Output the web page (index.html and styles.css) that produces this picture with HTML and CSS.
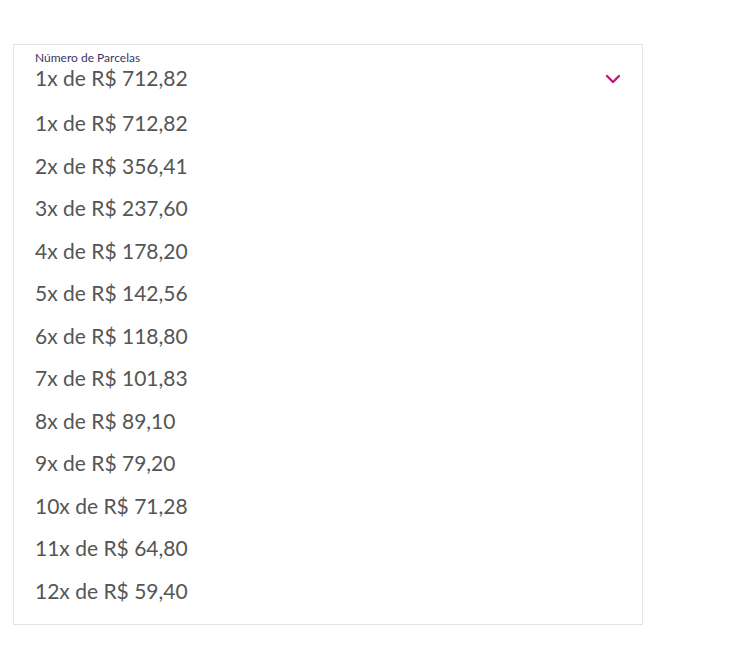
FILE: index.html
```html
<!DOCTYPE html>
<html>
	<head>
		<meta charset="utf-8">
		<title>Parcelas</title>
		<link rel="stylesheet" href="styles.css">
	</head>
	<body>
		<div class="select-box">
			<div class="select-head">
				<div class="select-current">
					<span class="select-label">Número de Parcelas</span>
					<span class="select-value">1x de R$ 712,82</span>
				</div>
				<svg class="chevron" width="16" height="10" viewBox="0 0 16 10">
					<path d="M2 2 L8 8 L14 2" fill="none" stroke="#c2187a" stroke-width="2.4" stroke-linecap="round" stroke-linejoin="round"/>
				</svg>
			</div>
			<ul class="options">
				<li>1x de R$ 712,82</li>
				<li>2x de R$ 356,41</li>
				<li>3x de R$ 237,60</li>
				<li>4x de R$ 178,20</li>
				<li>5x de R$ 142,56</li>
				<li>6x de R$ 118,80</li>
				<li>7x de R$ 101,83</li>
				<li>8x de R$ 89,10</li>
				<li>9x de R$ 79,20</li>
				<li>10x de R$ 71,28</li>
				<li>11x de R$ 64,80</li>
				<li>12x de R$ 59,40</li>
			</ul>
		</div>
	</body>
</html>
```

FILE: styles.css
```css
body {
	margin: 0;
	padding: 44px 0 0 13px;
	font-family: Lato, "Open Sans", sans-serif;
	color: #555;
	background: #fff;
}

.select-box {
	width: 630px;
	border: 1px solid #e3e3e3;
	box-sizing: border-box;
	padding-bottom: 12px;
}

.select-head {
	display: flex;
	justify-content: space-between;
	align-items: center;
	padding: 6px 21px 0 21px;
}

.select-current {
	display: flex;
	flex-direction: column;
}

.select-label {
	font-size: 12px;
	line-height: 14px;
	color: #3b3564;
}

.select-value {
	font-size: 21px;
	line-height: 26px;
}

.chevron {
	margin-top: 16px;
}

.options {
	list-style: none;
	margin: 0;
	padding: 11px 21px 0 21px;
}

.options li {
	font-size: 21px;
	line-height: 42.5px;
}
```
